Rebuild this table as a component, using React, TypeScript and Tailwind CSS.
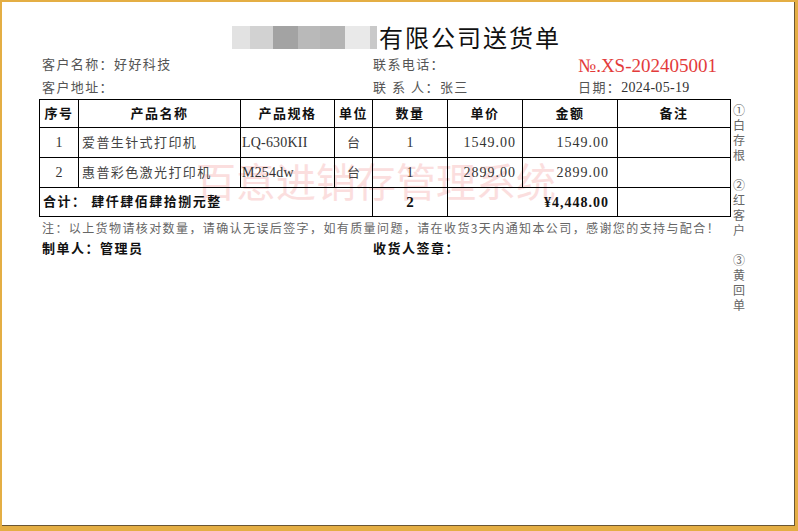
const F = "font-['Liberation_Serif','Noto_Sans_CJK_SC',serif]";

const blocks: [number, string][] = [
  [18, "#e2e2e2"],
  [23, "#d2d2d2"],
  [25, "#a3a3a3"],
  [22, "#b9b9b9"],
  [25, "#b4b4b4"],
  [25, "#e9e9e9"],
  [7, "#c9c9c9"],
];

const rows = [
  { no: "1", name: "爱普生针式打印机", spec: "LQ-630KII", unit: "台", qty: "1", price: "1549.00", amount: "1549.00" },
  { no: "2", name: "惠普彩色激光打印机", spec: "M254dw", unit: "台", qty: "1", price: "2899.00", amount: "2899.00" },
];

export default function App() {
  return (
    <div className="w-[798px] h-[531px] bg-[#e4ae44] pt-[2px] pl-[2px] pr-[3px] pb-[5px]">
      <div className={`relative w-full h-full bg-white border-r border-b border-[#6a5634] ${F}`}>
        {/* watermark */}
        <div className="absolute left-[194px] top-[158px] text-[40px] leading-none text-[#fbdede] font-['Noto_Sans_CJK_SC',sans-serif] whitespace-nowrap pointer-events-none select-none">
          百意进销存管理系统
        </div>

        <div className="relative flex pl-[37px] pt-[18px]">
          {/* main column */}
          <div className="w-[691px] flex flex-col">
            {/* title */}
            <div className="h-[34px] flex items-center pl-[193px]">
              <div className="flex h-[23px]">
                {blocks.map(([w, c], i) => (
                  <div key={i} style={{ width: w, backgroundColor: c }} className="h-full" />
                ))}
              </div>
              <span className="ml-[2px] text-[24px] leading-none tracking-[2px] text-[#111] font-['Noto_Sans_CJK_SC',sans-serif]">
                有限公司送货单
              </span>
            </div>

            {/* info rows */}
            <div className="h-[22px] flex items-center pl-[3px] text-[13px] tracking-[1.4px] text-[#555]">
              <div className="w-[331px]">客户名称：好好科技</div>
              <div className="w-[205px]">联系电话：</div>
              <div className="text-[19px] tracking-normal text-[#e33b3b] leading-none">№.XS-202405001</div>
            </div>
            <div className="h-[23px] flex items-center pl-[3px] text-[13px] tracking-[1.4px] text-[#555]">
              <div className="w-[331px]">客户地址：</div>
              <div className="w-[205px] whitespace-pre">联 系 人：张三</div>
              <div>
                日期：<span className="text-[14px] text-[#333] tracking-[0.3px]">2024-05-19</span>
              </div>
            </div>

            {/* table */}
            <table className="w-[691px] table-fixed border-collapse border border-black text-[#333]">
              <colgroup>
                <col className="w-[39px]" />
                <col className="w-[162px]" />
                <col className="w-[94px]" />
                <col className="w-[38px]" />
                <col className="w-[75px]" />
                <col className="w-[75px]" />
                <col className="w-[95px]" />
                <col className="w-[113px]" />
              </colgroup>
              <thead>
                <tr className="h-[28px] text-[13px] font-bold tracking-[1.5px] text-[#111]">
                  {["序号", "产品名称", "产品规格", "单位", "数量", "单价", "金额", "备注"].map((h) => (
                    <th key={h} className="border border-black p-0 text-center font-bold">
                      {h}
                    </th>
                  ))}
                </tr>
              </thead>
              <tbody>
                {rows.map((r) => (
                  <tr key={r.no} className="h-[30px]">
                    <td className="border border-black p-0 text-center text-[14px]">{r.no}</td>
                    <td className="border border-black p-0 pl-[3px] text-[13px] tracking-[1.4px] text-[#444]">{r.name}</td>
                    <td className="border border-black p-0 pl-[1px] text-[14px] tracking-[0.2px]">{r.spec}</td>
                    <td className="border border-black p-0 text-center text-[13px] text-[#444]">{r.unit}</td>
                    <td className="border border-black p-0 text-center text-[14px]">{r.qty}</td>
                    <td className="border border-black p-0 pr-[6px] text-right text-[14px] tracking-[1px]">{r.price}</td>
                    <td className="border border-black p-0 pr-[8px] text-right text-[14px] tracking-[1px]">{r.amount}</td>
                    <td className="border border-black p-0"></td>
                  </tr>
                ))}
                <tr className="h-[29px] font-bold text-[#111]">
                  <td colSpan={4} className="border border-black p-0 pl-[3px] text-[13px] tracking-[1.5px] whitespace-pre">
                    合计： 肆仟肆佰肆拾捌元整
                  </td>
                  <td className="border border-black p-0 text-center text-[15px]">2</td>
                  <td colSpan={2} className="border border-black p-0 pr-[8px] text-right text-[14px] tracking-[1px]">
                    ¥4,448.00
                  </td>
                  <td className="border border-black p-0"></td>
                </tr>
              </tbody>
            </table>

            {/* note */}
            <div className="h-[22px] flex items-center pl-[3px] text-[12px] tracking-[1.4px] text-[#666] whitespace-nowrap font-['Noto_Sans_CJK_SC',sans-serif]">
              注：以上货物请核对数量，请确认无误后签字，如有质量问题，请在收货3天内通知本公司，感谢您的支持与配合！
            </div>
            <div className="h-[20px] flex items-center pl-[3px] text-[13px] tracking-[1.5px] font-bold text-[#111]">
              <div className="w-[331px]">制单人：管理员</div>
              <div>收货人签章：</div>
            </div>
          </div>

          {/* side labels */}
          <div className="ml-[3px] w-[12px] pt-[82px] flex flex-col items-center text-[12px] leading-[15px] text-[#666] font-['Noto_Sans_CJK_SC',sans-serif]">
            {["①", "白", "存", "根", "", "②", "红", "客", "户", "", "③", "黄", "回", "单"].map((c, i) => (
              <div key={i} className="h-[15px]">{c}</div>
            ))}
          </div>
        </div>
      </div>
    </div>
  );
}
